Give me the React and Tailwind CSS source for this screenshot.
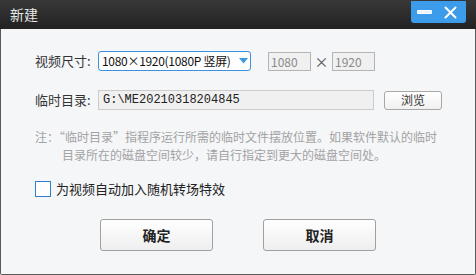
export default function App() {
  const cjk = { fontFamily: '"Noto Sans CJK SC", "Liberation Sans", sans-serif' };
  return (
    <div className="w-[476px] h-[275px] flex flex-col select-none" style={cjk}>
      <div className="h-[29px] flex justify-between items-start bg-gradient-to-b from-[#383838] to-[#222222]">
        <div className="pl-[10px] pt-[4px] text-[14px] leading-[20px] text-[#e6e6e6]">新建</div>
        <div className="mr-[10px] mt-[1px] w-[55px] h-[22px] rounded-b-[3px] bg-[#3d9cea] flex items-center">
          <div className="ml-[6px] w-[15px] h-[4px] rounded-[1px] bg-[#e8f2fb] border border-white/80"></div>
          <svg className="ml-[12px]" width="13" height="13" viewBox="0 0 13 13">
            <path d="M1.5 1.5 L11.5 11.5 M11.5 1.5 L1.5 11.5" stroke="#ffffff" strokeWidth="2" strokeLinecap="round" />
          </svg>
        </div>
      </div>
      <div className="flex-1 flex flex-col bg-[#f5f6f8] border-x border-b border-[#5a5a5a] pl-[34px] pt-[22px] rounded-b-[2px]">
        <div className="h-[20px] flex items-center">
          <div className="w-[63px] shrink-0 whitespace-nowrap text-[13px] text-[#333333]">视频尺寸:</div>
          <div className="w-[153px] shrink-0 h-[20px] rounded-[3px] border border-[#3d8fe0] bg-white flex items-center justify-between pl-[3px] pr-[2px]">
            <span className="text-[12px] text-[#111111] whitespace-nowrap tracking-[-0.3px]">1080×1920(1080P 竖屏)</span>
            <svg width="9" height="6" viewBox="0 0 9 6"><path d="M0 0 L9 0 L4.5 5.5 Z" fill="#3d9ae6" /></svg>
          </div>
          <div className="ml-[17px] shrink-0 w-[43px] h-[19px] border border-[#b4b4b4] bg-[#f0f0f0] text-[12px] text-[#8a8a8a] leading-[17px] pl-[2px]">1080</div>
          <div className="w-[21px] shrink-0 text-center text-[14px] text-[#555555]">×</div>
          <div className="w-[43px] shrink-0 h-[19px] border border-[#b4b4b4] bg-[#f0f0f0] text-[12px] text-[#8a8a8a] leading-[17px] pl-[2px]">1920</div>
        </div>
        <div className="mt-[19px] h-[20px] flex items-center">
          <div className="w-[63px] shrink-0 whitespace-nowrap text-[13px] text-[#333333]">临时目录:</div>
          <div className="w-[276px] shrink-0 h-[20px] border border-[#cccccc] bg-[#f0f0f0] text-[12px] text-[#222222] leading-[18px] pl-[4px]" style={{ fontFamily: '"Liberation Mono", "Noto Sans CJK SC", monospace' }}>G:\ME20210318204845</div>
          <div className="ml-[10px] shrink-0 w-[58px] h-[19px] rounded-[3px] border border-[#a8a8a8] bg-gradient-to-b from-white to-[#f0f0f0] text-[12px] text-[#333333] flex items-center justify-center">浏览</div>
        </div>
        <div className="mt-[18px] text-[12px] leading-[18px] text-[#a3a3a3]">
          <div className="whitespace-nowrap">注：“临时目录”指程序运行所需的临时文件摆放位置。如果软件默认的临时</div>
          <div className="pl-[27px] whitespace-nowrap">目录所在的磁盘空间较少，请自行指定到更大的磁盘空间处。</div>
        </div>
        <div className="mt-[17px] h-[16px] flex items-center">
          <div className="w-[16px] h-[16px] border border-[#2b7fd4] bg-white"></div>
          <div className="ml-[5px] text-[13px] text-[#222222]">为视频自动加入随机转场特效</div>
        </div>
        <div className="mt-[22px] flex justify-center gap-[50px] pr-[34px]">
          <div className="w-[113px] h-[32px] rounded-[3px] border border-[#a0a0a0] bg-gradient-to-b from-white to-[#eeeeee] flex items-center justify-center text-[14px] font-bold text-[#222222]">确定</div>
          <div className="w-[113px] h-[32px] rounded-[3px] border border-[#a0a0a0] bg-gradient-to-b from-white to-[#eeeeee] flex items-center justify-center text-[14px] font-bold text-[#222222]">取消</div>
        </div>
      </div>
    </div>
  );
}
